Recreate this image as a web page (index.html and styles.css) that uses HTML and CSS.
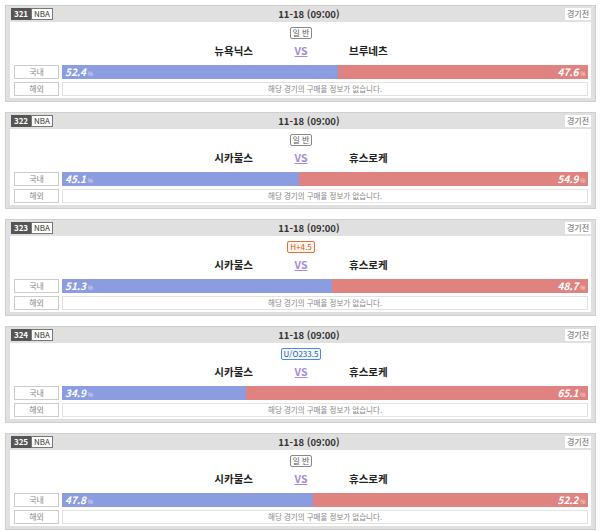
FILE: index.html
```html
<!DOCTYPE html>
<html lang="ko">
<head>
    <meta charset="utf-8">
    <link rel="stylesheet" href="styles.css">
</head>
<body>
    <div class="game">
        <div class="game-head">
            <div class="league"><span class="num">321</span><span class="lg">NBA</span></div>
            <div class="date">11-18 (09:00)</div>
            <div class="state">경기전</div>
        </div>
        <div class="game-body">
            <div class="type"><span class="tag normal">일 반</span></div>
            <div class="teams">
                <div class="team home">뉴욕닉스</div>
                <div class="vs">VS</div>
                <div class="team away">브루네츠</div>
            </div>
            <div class="row">
                <div class="label">국내</div>
                <div class="bar">
                    <div class="left" style="width:52.4%">52.4<small>%</small></div>
                    <div class="right">47.6<small>%</small></div>
                </div>
            </div>
            <div class="row">
                <div class="label">해외</div>
                <div class="bar empty">해당 경기의 구매율 정보가 없습니다.</div>
            </div>
        </div>
    </div>

    <div class="game">
        <div class="game-head">
            <div class="league"><span class="num">322</span><span class="lg">NBA</span></div>
            <div class="date">11-18 (09:00)</div>
            <div class="state">경기전</div>
        </div>
        <div class="game-body">
            <div class="type"><span class="tag normal">일 반</span></div>
            <div class="teams">
                <div class="team home">시카불스</div>
                <div class="vs">VS</div>
                <div class="team away">휴스로케</div>
            </div>
            <div class="row">
                <div class="label">국내</div>
                <div class="bar">
                    <div class="left" style="width:45.1%">45.1<small>%</small></div>
                    <div class="right">54.9<small>%</small></div>
                </div>
            </div>
            <div class="row">
                <div class="label">해외</div>
                <div class="bar empty">해당 경기의 구매율 정보가 없습니다.</div>
            </div>
        </div>
    </div>

    <div class="game">
        <div class="game-head">
            <div class="league"><span class="num">323</span><span class="lg">NBA</span></div>
            <div class="date">11-18 (09:00)</div>
            <div class="state">경기전</div>
        </div>
        <div class="game-body">
            <div class="type"><span class="tag handi">H+4.5</span></div>
            <div class="teams">
                <div class="team home">시카불스</div>
                <div class="vs">VS</div>
                <div class="team away">휴스로케</div>
            </div>
            <div class="row">
                <div class="label">국내</div>
                <div class="bar">
                    <div class="left" style="width:51.3%">51.3<small>%</small></div>
                    <div class="right">48.7<small>%</small></div>
                </div>
            </div>
            <div class="row">
                <div class="label">해외</div>
                <div class="bar empty">해당 경기의 구매율 정보가 없습니다.</div>
            </div>
        </div>
    </div>

    <div class="game">
        <div class="game-head">
            <div class="league"><span class="num">324</span><span class="lg">NBA</span></div>
            <div class="date">11-18 (09:00)</div>
            <div class="state">경기전</div>
        </div>
        <div class="game-body">
            <div class="type"><span class="tag uo">U/O233.5</span></div>
            <div class="teams">
                <div class="team home">시카불스</div>
                <div class="vs">VS</div>
                <div class="team away">휴스로케</div>
            </div>
            <div class="row">
                <div class="label">국내</div>
                <div class="bar">
                    <div class="left" style="width:34.9%">34.9<small>%</small></div>
                    <div class="right">65.1<small>%</small></div>
                </div>
            </div>
            <div class="row">
                <div class="label">해외</div>
                <div class="bar empty">해당 경기의 구매율 정보가 없습니다.</div>
            </div>
        </div>
    </div>

    <div class="game">
        <div class="game-head">
            <div class="league"><span class="num">325</span><span class="lg">NBA</span></div>
            <div class="date">11-18 (09:00)</div>
            <div class="state">경기전</div>
        </div>
        <div class="game-body">
            <div class="type"><span class="tag normal">일 반</span></div>
            <div class="teams">
                <div class="team home">시카불스</div>
                <div class="vs">VS</div>
                <div class="team away">휴스로케</div>
            </div>
            <div class="row">
                <div class="label">국내</div>
                <div class="bar">
                    <div class="left" style="width:47.8%">47.8<small>%</small></div>
                    <div class="right">52.2<small>%</small></div>
                </div>
            </div>
            <div class="row">
                <div class="label">해외</div>
                <div class="bar empty">해당 경기의 구매율 정보가 없습니다.</div>
            </div>
        </div>
    </div>
</body>
</html>
```

FILE: styles.css
```css
body
{
    margin: 5px 4px 5px 5px;
    font-family: "Noto Sans CJK KR", "Noto Sans", sans-serif;
    color: #333;
    background: #fff;
}
.game
{
    border: 1px solid #cfcfcf;
    background-color: #e0e0e0;
    padding: 0 4px 3px 4px;
    margin-bottom: 10px;
}
.game-head
{
    display: flex;
    align-items: center;
    justify-content: space-between;
    height: 16px;
}
.league
{
    display: flex;
    height: 12px;
    margin-left: 1px;
    font-size: 8px;
    line-height: 12px;
}
.num
{
    background-color: #555;
    color: #fff;
    font-weight: bold;
    padding: 0 2px;
    width: 16px;
    text-align: center;
}
.lg
{
    background-color: #fff;
    border: 1px solid #777;
    line-height: 10px;
    padding: 0 2px;
    color: #333;
}
.date
{
    font-size: 9.5px;
    font-weight: bold;
    color: #333;
}
.state
{
    background-color: #fff;
    font-size: 8px;
    color: #666;
    height: 12px;
    line-height: 12px;
    padding: 0 2px;
}
.game-body
{
    background-color: #fff;
    padding: 5px 3px 2px 4px;
}
.type
{
    display: flex;
    justify-content: center;
    height: 12px;
}
.tag
{
    font-size: 8px;
    line-height: 10px;
    padding: 0 2px;
    border: 1px solid #888;
    border-radius: 2px;
    color: #555;
}
.tag.handi
{
    border-color: #e0703a;
    color: #d05a20;
    background-color: #fff4ec;
}
.tag.uo
{
    border-color: #4a8ad8;
    color: #2a5aa0;
    background-color: #f2f8ff;
}
.teams
{
    display: flex;
    justify-content: center;
    margin-top: 3px;
    height: 17px;
    line-height: 17px;
}
.team
{
    width: 100px;
    font-size: 10.5px;
    font-weight: bold;
    color: #222;
}
.home
{
    text-align: right;
}
.away
{
    text-align: left;
}
.vs
{
    width: 96px;
    text-align: center;
    font-size: 10.5px;
    font-weight: bold;
    color: #a68bd8;
    text-decoration: underline;
}
.row
{
    display: flex;
    gap: 3px;
    height: 14px;
    margin-top: 3px;
}
.teams + .row
{
    margin-top: 6px;
}
.label
{
    width: 43px;
    border: 1px solid #ccc;
    font-size: 8px;
    line-height: 12px;
    text-align: center;
    color: #888;
}
.bar
{
    flex: 1;
    display: flex;
    font-size: 10px;
    font-weight: bold;
    font-style: italic;
    color: #fff;
    line-height: 14px;
}
.bar small
{
    font-size: 6px;
    font-weight: normal;
    color: #e4e4e4;
    margin-left: 1px;
}
.left
{
    background-color: #8b9de0;
    padding-left: 3px;
    box-sizing: border-box;
}
.right
{
    flex: 1;
    background-color: #e08380;
    text-align: right;
    padding-right: 3px;
}
.bar.empty
{
    border: 1px solid #e2e2e2;
    justify-content: center;
    font-size: 7.5px;
    font-weight: normal;
    font-style: normal;
    color: #888;
    line-height: 12px;
}
```
